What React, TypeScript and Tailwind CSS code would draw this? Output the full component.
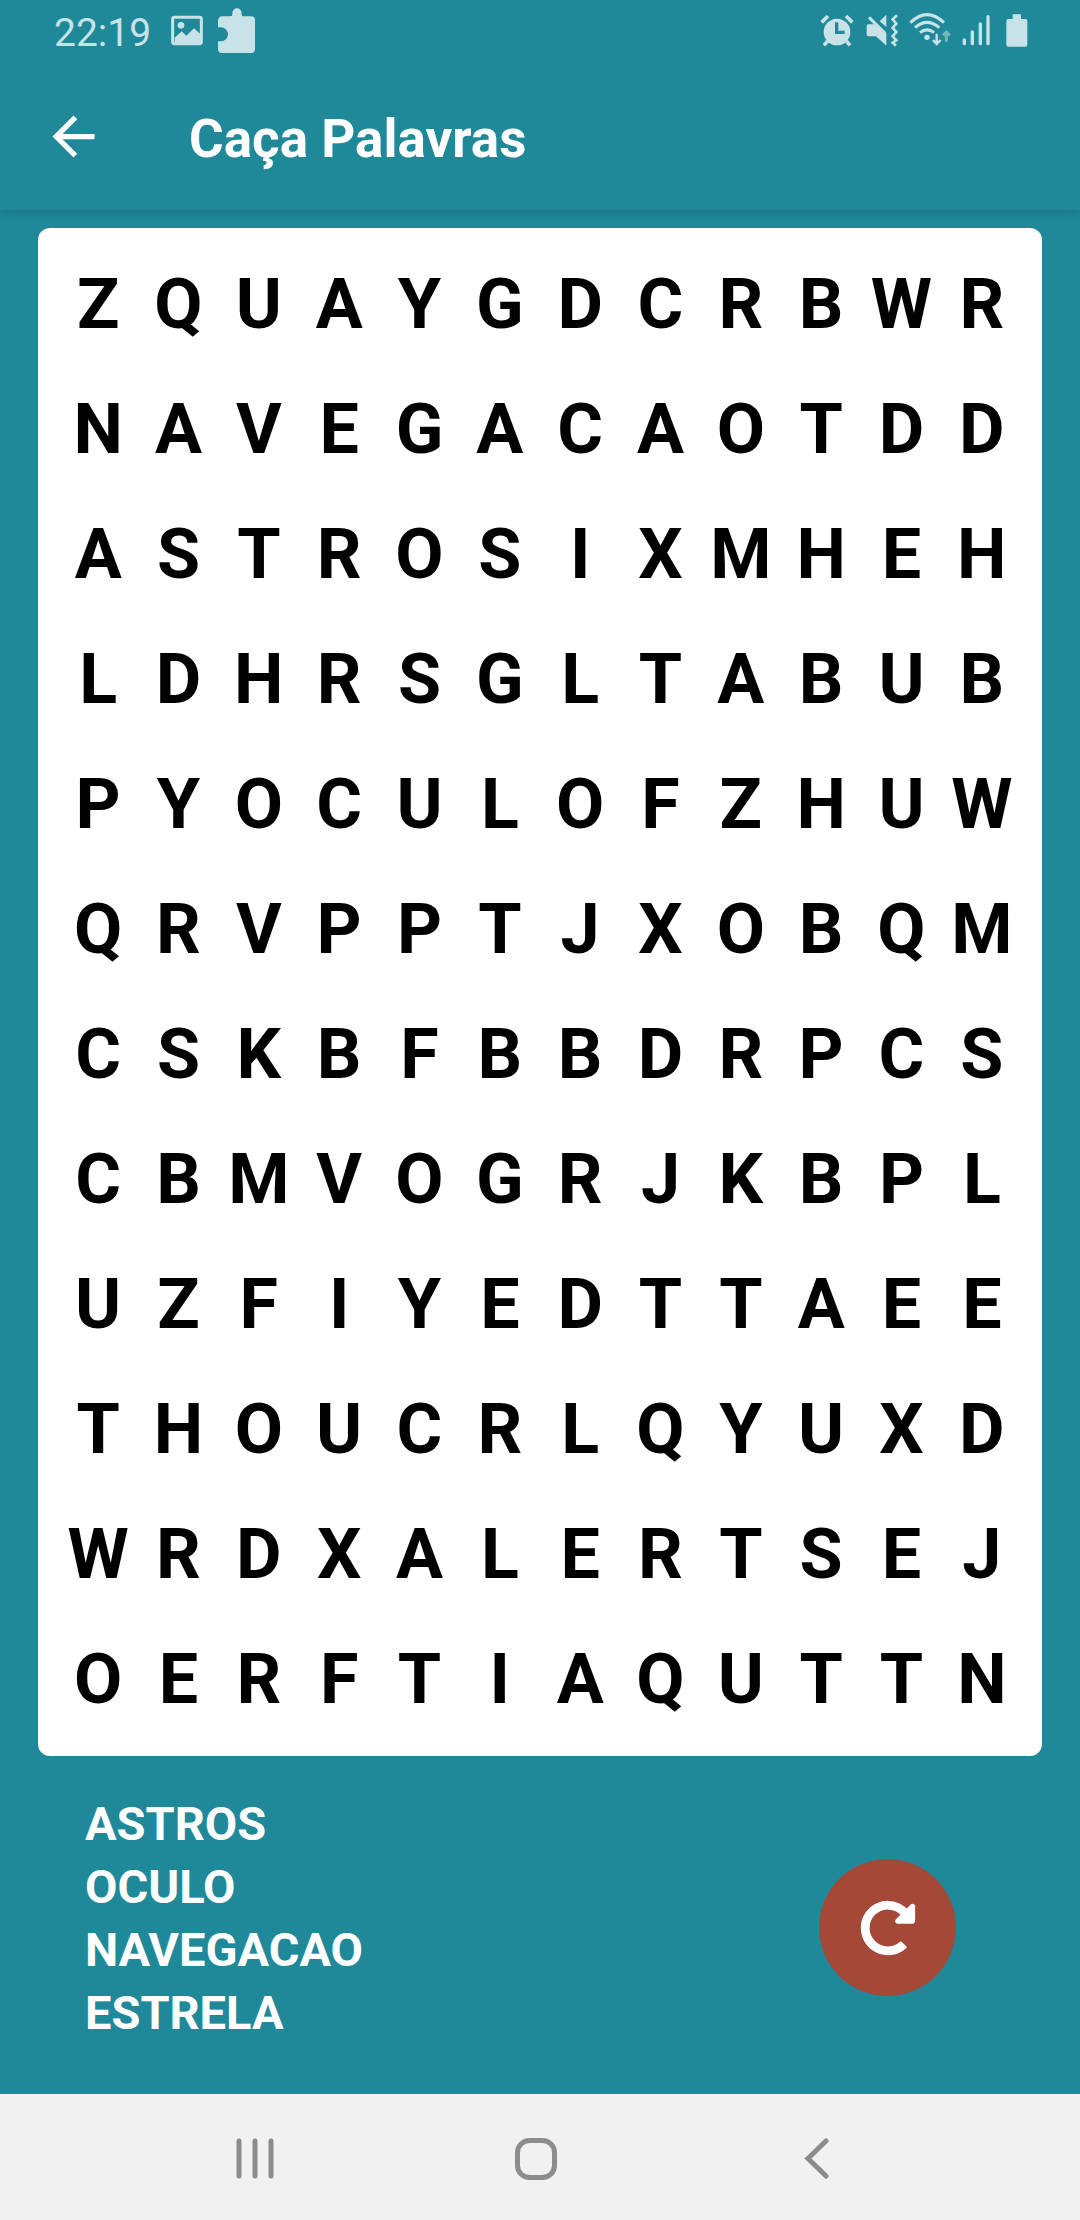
import React from "react";
import { FaRedoAlt } from "react-icons/fa";
import { MdArrowBack } from "react-icons/md";

const ROWS = [
  "ZQUAYGDCRBWR",
  "NAVEGACAOTDD",
  "ASTROSIXMHEH",
  "LDHRSGLTABUB",
  "PYOCULOFZHUW",
  "QRVPPTJXOBQM",
  "CSKBFBBDRPCS",
  "CBMVOGRJKBPL",
  "UZFIYEDTTAEE",
  "THOUCRLQYUXD",
  "WRDXALERTSEJ",
  "OERFTIAQUTTN",
];

const WORDS = ["ASTROS", "OCULO", "NAVEGACAO", "ESTRELA"];

function StatusBar() {
  return (
    <div className="flex h-[63px] items-center justify-between pl-[54px] pr-[52px] text-[#c7e3e7]">
      <div className="flex items-center">
        <span className="pt-1 text-[39px] leading-none">22:19</span>
        <svg className="ml-5 h-[47px] w-8" viewBox="420 24 96 141" fill="none" aria-hidden="true">
          <rect x="425" y="52" width="86" height="79" rx="5" stroke="currentColor" strokeWidth="9" />
          <circle cx="450" cy="76" r="10" fill="currentColor" />
          <path d="M431 113 452 94l14 13 23-22 22 20v26h-80z" fill="currentColor" />
        </svg>
        <svg className="ml-[15px] h-[47px] w-[37px]" viewBox="561 24 111 141" fill="currentColor" aria-hidden="true">
          <path d="M575 49h24q5 0 5-6v-4a14 14 0 0 1 28 0v4q0 6 5 6h23q12 0 12 12v86q0 12-12 12h-87q-12 0-12-12v-23h9a21 21 0 0 0 0-42h-9V63q0-14 14-14z" />
        </svg>
      </div>
      <div className="flex items-center">
        <svg className="h-[47px] w-[34px]" viewBox="57 24 102 141" fill="none" stroke="currentColor" aria-hidden="true">
          <circle cx="108" cy="96" r="40" fill="currentColor" stroke="none" />
          <path d="M62 67 81 48M154 67 135 48" strokeWidth="11" />
          <path d="M80 123 69 136M136 123l11 13" strokeWidth="11" />
          <path d="M107 67v30h24" stroke="#1f8999" strokeWidth="10" />
        </svg>
        <svg className="ml-3 h-[47px] w-[33px]" viewBox="194 24 99 141" fill="currentColor" aria-hidden="true">
          <path d="M202 73h22l31 26v38l-31-28h-22q-6 0-6-6V79q0-6 6-6z" />
          <path d="M235 64 255 44v37z" />
          <path d="M203 52 251 100" fill="none" stroke="currentColor" strokeWidth="9" />
          <path d="M287 46 274 58 285 71 274 84 285 96 274 109 285 121 274 128 284 137" fill="none" stroke="currentColor" strokeWidth="8" />
        </svg>
        <svg className="ml-[10px] h-[47px] w-[42px]" viewBox="325 24 126 141" fill="none" stroke="currentColor" aria-hidden="true">
          <path d="M329 68Q379 20 430 68M343 83q36-32 73 0M358 98q21-17 42 0" strokeWidth="9" />
          <circle cx="379" cy="112" r="8" fill="currentColor" stroke="none" />
          <path d="M408 101v30M397 120l11 12 12-12" strokeWidth="7" />
          <path d="M437 125V98M427 106l10-10 11 10" strokeWidth="9" opacity="0.5" />
        </svg>
        <svg className="ml-[11px] h-[47px] w-7" viewBox="484 24 84 141" stroke="currentColor" strokeWidth="10" strokeLinecap="round" aria-hidden="true">
          <path d="M491 131v-11M515 131V96M539 131V72M562 131V50" />
        </svg>
        <svg className="ml-4 h-[47px] w-[22px]" viewBox="617 24 66 141" fill="currentColor" aria-hidden="true">
          <path d="M637 43h25v14h13q6 0 6 6v71q0 6-6 6h-51q-6 0-6-6V63q0-6 6-6h13z" />
        </svg>
      </div>
    </div>
  );
}

function NavBar() {
  return (
    <nav aria-label="Sistema" className="flex h-[126px] items-center justify-around bg-[#f1f1f1] pt-1 pr-[123px] pl-[114px] text-[#8c8c8c]">
      <button type="button" aria-label="Recentes" className="p-5">
        <svg width="42" height="42" viewBox="0 0 42 42" stroke="currentColor" strokeWidth="5" strokeLinecap="round">
          <path d="M5 3v35M21 3v35M37 3v35" />
        </svg>
      </button>
      <button type="button" aria-label="Início" className="p-5">
        <svg width="42" height="42" viewBox="0 0 42 42" fill="none" stroke="currentColor" strokeWidth="5">
          <rect x="2.5" y="2.5" width="37" height="37" rx="12" />
        </svg>
      </button>
      <button type="button" aria-label="Voltar" className="p-5">
        <svg width="42" height="42" viewBox="0 0 42 42" fill="none" stroke="currentColor" strokeWidth="5" strokeLinecap="round">
          <path d="M30 3 12 20.500l18 17.500" />
        </svg>
      </button>
    </nav>
  );
}

export default function App() {
  return (
    <div className="flex min-h-screen flex-col bg-[#1f8999] font-['Roboto',sans-serif]">
      <header className="shadow-[0_3px_8px_rgba(0,0,0,0.14)]">
        <StatusBar />
        <div className="flex h-[147px] items-center gap-[84px] px-[42px] text-white">
          <button type="button" aria-label="Voltar">
            <MdArrowBack size={63} />
          </button>
          <h1 className="pt-1.5 text-[53px] leading-none font-bold">Caça Palavras</h1>
        </div>
      </header>
      <main className="flex flex-1 flex-col pt-[18px]">
        <section aria-label="Letras" className="mx-[38px] rounded-xl bg-white px-5 py-[14px]">
          {ROWS.map((row) => (
            <div key={row} className="grid grid-cols-12 text-center text-[70px] leading-[125px] font-bold text-black">
              {row.split("").map((letter, i) => (
                <span key={i}>{letter}</span>
              ))}
            </div>
          ))}
        </section>
        <div className="flex flex-1 items-start justify-between pt-9 pr-[124px] pl-[85px]">
          <ul className="text-[47px] leading-[63px] font-bold text-white">
            {WORDS.map((word) => (
              <li key={word}>{word}</li>
            ))}
          </ul>
          <button
            type="button"
            aria-label="Reiniciar"
            className="mt-[67px] flex size-[137px] items-center justify-center rounded-full bg-[#a44837] text-white"
          >
            <FaRedoAlt size={56} />
          </button>
        </div>
      </main>
      <NavBar />
    </div>
  );
}
